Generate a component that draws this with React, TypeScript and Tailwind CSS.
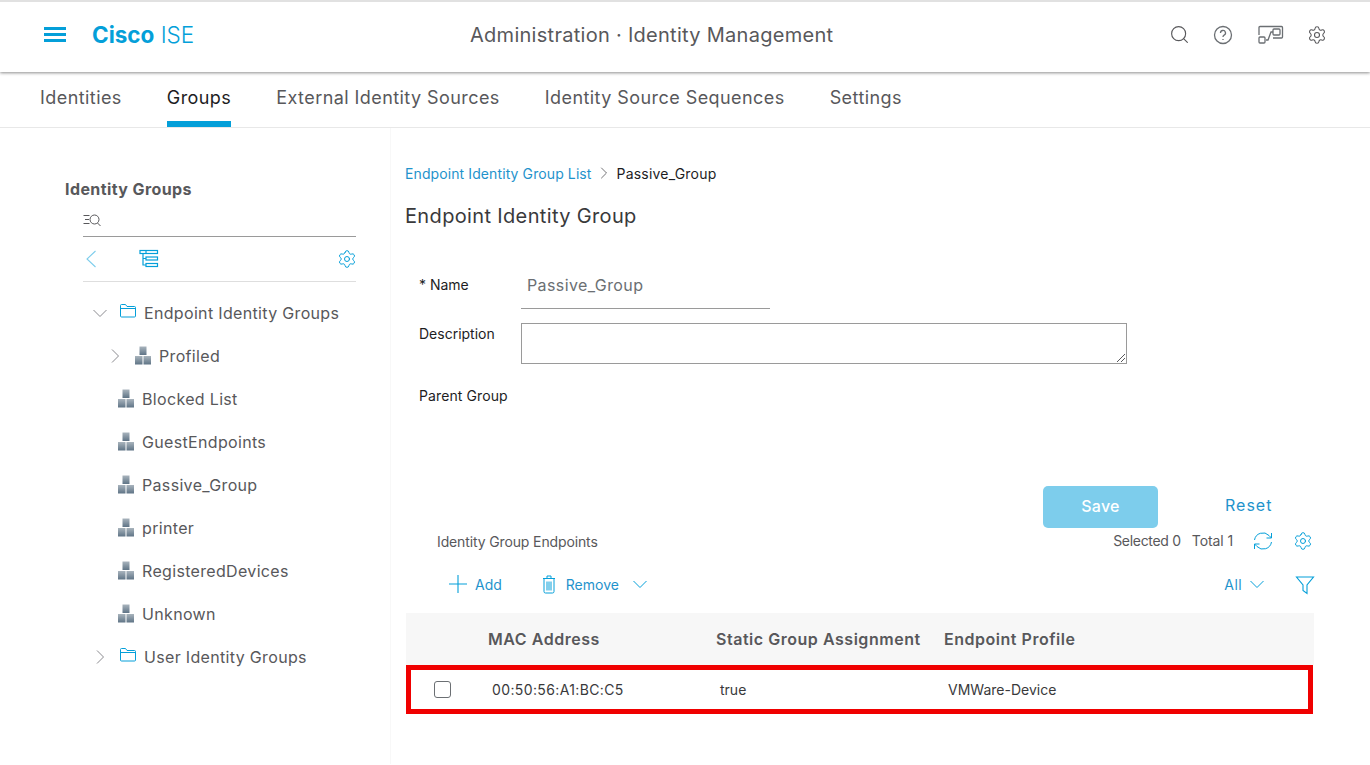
import { ChevronRight, Search, Settings } from 'lucide-react';

const tabs = ['Identities', 'Groups', 'External Identity Sources', 'Identity Source Sequences', 'Settings'];
const groups = ['Blocked List', 'GuestEndpoints', 'Passive_Group', 'printer', 'RegisteredDevices', 'Unknown'];

const Blocks = () => (
  <svg width="18" height="19" viewBox="0 0 18 19" className="shrink-0">
    <defs>
      <linearGradient id="blockFill" x1="0" y1="0" x2="0" y2="1">
        <stop offset="0" stopColor="#a9b4bd" />
        <stop offset="1" stopColor="#5f7486" />
      </linearGradient>
    </defs>
    <rect x="5.5" y="0.5" width="7" height="8.5" fill="url(#blockFill)" />
    <rect x="1" y="10" width="7.5" height="8.5" fill="url(#blockFill)" />
    <rect x="9.5" y="10" width="7.5" height="8.5" fill="url(#blockFill)" />
  </svg>
);

const TreeIcon = () => (
  <svg width="20" height="20" viewBox="0 0 20 20" fill="none" stroke="#049fd9" strokeWidth="1.2">
    <rect x="1" y="1.5" width="17.5" height="3" />
    <rect x="7" y="8" width="11.5" height="3" />
    <rect x="7" y="14.5" width="11.5" height="3" />
    <path d="M4 4.5v11.5h3M4 9.5h3M7 1.5v3" />
  </svg>
);

const FlowIcon = () => (
  <svg width="26" height="20" viewBox="0 0 26 20" fill="none" stroke="#6b6f73" strokeWidth="1.3">
    <path d="M1 10V2.5A1 1 0 0 1 2 1.5h21.5a1 1 0 0 1 1 1V12a1 1 0 0 1-1 1H15" />
    <rect x="1" y="12" width="6" height="6" rx="1" />
    <rect x="15" y="4" width="7" height="6" rx="1" />
    <path d="M8 15h2l3-8h2" />
  </svg>
);

const SearchList = () => (
  <svg width="20" height="14" viewBox="0 0 20 14" fill="none" stroke="#58585b" strokeWidth="1">
    <path d="M0.5 2.5h6M2 6.5h4M0.5 10.5h6" />
    <circle cx="11.5" cy="6.5" r="4.5" />
    <path d="M14.5 10l3 3" />
  </svg>
);

const Funnel = () => (
  <svg width="20" height="20" viewBox="0 0 20 20" fill="none" stroke="#049fd9" strokeWidth="1.1">
    <path d="M1.5 2h17l-6.5 8v8.5l-4-3V10z" />
  </svg>
);

const Caret = ({ color = '#049fd9', dir = 'down' }: { color?: string; dir?: 'down' | 'right' }) => (
  <svg width="14" height="14" viewBox="0 0 14 14" fill="none" stroke={color} strokeWidth="1" className="shrink-0">
    <path d={dir === 'down' ? 'M0.5 4l6.5 6.5L13.5 4' : 'M4 0.5l6.5 6.5L4 13.5'} />
  </svg>
);

const FolderIcon = () => (
  <svg width="16" height="14" viewBox="0 0 16 14" fill="none" stroke="#049fd9" strokeWidth="1" className="mb-[4px] shrink-0">
    <path d="M0.5 12V1.5a1 1 0 0 1 1-1h4l1.5 2h7.5a1 1 0 0 1 1 1V12a1 1 0 0 1-1 1h-13a1 1 0 0 1-1-1zM0.5 4.5h15" />
  </svg>
);

const TrashIcon = () => (
  <svg width="14" height="19" viewBox="0 0 14 19" fill="none" stroke="#049fd9" strokeWidth="1" className="shrink-0">
    <path d="M1 3.5h12M5 3.5V1h4v2.5M2 3.5v13a1.5 1.5 0 0 0 1.5 1.5h7a1.5 1.5 0 0 0 1.5-1.5v-13M5 6.5v9M7 6.5v9M9 6.5v9" />
  </svg>
);

const RefreshIcon = () => (
  <svg width="20" height="20" viewBox="0 0 20 20" fill="none" stroke="#049fd9" strokeWidth="1" className="shrink-0">
    <path d="M1.5 9A8.5 8.5 0 0 1 16 4.5l2.5 2.5M18.5 2v5h-5M18.5 11A8.5 8.5 0 0 1 4 15.5L1.5 13M1.5 18v-5h5" />
  </svg>
);

export default function App() {
  return (
    <div className="h-[765px] w-[1370px] overflow-hidden bg-white font-['Inter',sans-serif] text-[#39393b]">
      <header className="flex h-[72px] items-center border-t-2 border-[#e1e1e1] pb-[5px] pl-[44px] pr-[43px] shadow-[0_1px_3px_rgba(0,0,0,0.45)]">
        <div className="flex w-[22px] flex-col gap-[3px]">
          <span className="h-[3px] bg-[#049fd9]" />
          <span className="h-[3px] bg-[#049fd9]" />
          <span className="h-[3px] bg-[#049fd9]" />
        </div>
        <div className="ml-[26px] w-[378px] text-[22.5px] text-[#049fd9]">
          <span className="font-bold">Cisco</span> <span className="font-light">ISE</span>
        </div>
        <div className="text-[20px] tracking-[0.28px] text-[#58585b]">Administration · Identity Management</div>
        <div className="ml-auto flex items-center">
          <Search size={21} strokeWidth={1.3} className="text-[#58585b]" />
          <svg width="20" height="20" viewBox="0 0 20 20" fill="none" stroke="#6b6f73" strokeWidth="1.3" className="ml-[23px]">
            <circle cx="10" cy="10" r="8.5" />
            <path d="M7.5 8a2.5 2.5 0 1 1 3.6 2.2c-.8.4-1.1.9-1.1 1.8M10 14v1" />
          </svg>
          <div className="ml-[25px]"><FlowIcon /></div>
          <Settings size={20} strokeWidth={1.3} className="ml-[23px] text-[#58585b]" />
        </div>
      </header>

      <nav className="flex h-[56px] items-end gap-[45px] border-b border-[#e8e8e8] pl-[40px] text-[18px] tracking-[0.43px] text-[#58585b]">
        {tabs.map((tab) => (
          <div
            key={tab}
            className={`flex h-[54px] items-center border-b-[6px] ${tab === 'Groups' ? 'border-[#049fd9] text-[#1d1d1f]' : 'border-transparent'}`}
          >
            {tab}
          </div>
        ))}
      </nav>

      <div className="flex h-[636px]">
        <aside className="w-[391px] shrink-0 border-r border-[#f8f8f8] pl-[65px] pr-[34px] pt-[51px]">
          <h2 className="text-[16px] font-bold leading-[20px] tracking-[0.4px] text-[#58585b]">Identity Groups</h2>
          <div className="ml-[18px] mt-[11px] flex h-[27px] items-center border-b border-[#9a9a9a] pb-[7px]">
            <SearchList />
          </div>
          <div className="ml-[18px] flex h-[45px] items-center border-b border-[#dedede]">
            <svg width="12" height="18" viewBox="0 0 12 18" fill="none" stroke="#7dcdec" strokeWidth="1.1" className="ml-[2px]">
              <path d="M10.5 1L2 9l8.5 8" />
            </svg>
            <div className="ml-[42px]"><TreeIcon /></div>
            <Settings size={20} strokeWidth={1.2} className="-mr-[1px] ml-auto text-[#049fd9]" />
          </div>
          <ul className="mt-[9px] text-[16px] tracking-[0.33px] text-[#58585b]">
            <li className="flex h-[43px] items-center pl-[28px]">
              <Caret color="#8a8a8f" />
              <div className="ml-[13px]"><FolderIcon /></div>
              <span className="ml-[8px]">Endpoint Identity Groups</span>
            </li>
            <li className="flex h-[43px] items-center pl-[43px]">
              <Caret color="#8a8a8f" dir="right" />
              <div className="ml-[12px]"><Blocks /></div>
              <span className="ml-[7px]">Profiled</span>
            </li>
            {groups.map((group) => (
              <li key={group} className="flex h-[43px] items-center pl-[52px]">
                <Blocks />
                <span className="ml-[7px]">{group}</span>
              </li>
            ))}
            <li className="flex h-[43px] items-center pl-[28px]">
              <Caret color="#8a8a8f" dir="right" />
              <div className="ml-[13px]"><FolderIcon /></div>
              <span className="ml-[8px]">User Identity Groups</span>
            </li>
          </ul>
        </aside>

        <main className="flex-1 pl-[14px] pr-[56px] pt-[35px]">
          <div className="flex h-[20px] items-center text-[14px] tracking-[0.1px]">
            <span className="text-[#1f93cc]">Endpoint Identity Group List</span>
            <ChevronRight size={20} strokeWidth={1} className="mx-[2px] text-[#58585b]" />
            <span className="ml-[1px] tracking-[0.2px] text-[#1d1d1f]">Passive_Group</span>
          </div>
          <h1 className="mt-[20px] text-[20px] leading-[26px] tracking-[0.35px] text-[#39393b]">Endpoint Identity Group</h1>

          <div className="ml-[14px] mt-[34px]">
            <div className="flex h-[46px] items-start">
              <label className="w-[102px] pt-[12px] text-[14px] leading-[20px] text-[#1d1d1f]">* Name</label>
              <div className="h-[46px] w-[249px] border-b border-[#9a9a9a] pl-[6px] pt-[11px] text-[16px] leading-[22px] tracking-[0.4px] text-[#6b6f73]">Passive_Group</div>
            </div>
            <div className="mt-[14px] flex">
              <label className="w-[102px] text-[14px] leading-[22px] text-[#1d1d1f]">Description</label>
              <div className="relative h-[41px] w-[606px] border border-[#9a9a9a]">
                <svg width="10" height="10" viewBox="0 0 10 10" className="absolute bottom-0 right-0" stroke="#58585b" fill="none">
                  <path d="M1 9l8-8M5 9l4-4" />
                </svg>
              </div>
            </div>
            <div className="mt-[21px] text-[14px] leading-[22px] tracking-[0.1px] text-[#1d1d1f]">Parent Group</div>
          </div>

          <div className="mt-[79px] flex items-center pl-[638px]">
            <button className="h-[42px] w-[115px] rounded-[5px] bg-[#7dcdec] pb-[2px] text-[16px] font-medium tracking-[0.3px] text-white">Save</button>
            <span className="mb-[4px] ml-[67px] text-[16px] tracking-[1px] text-[#1f93cc]">Reset</span>
          </div>

          <div className="flex h-[25px] items-center pl-[32px] pr-[1px] text-[14px]">
            <span className="mt-[2px] tracking-[-0.13px] text-[#58585b]">Identity Group Endpoints</span>
            <span className="ml-auto tracking-[-0.3px] text-[#58585b]">Selected 0</span>
            <span className="ml-[11px] tracking-[-0.1px] text-[#58585b]">Total 1</span>
            <div className="ml-[20px]"><RefreshIcon /></div>
            <Settings size={20} strokeWidth={1.2} className="ml-[20px] text-[#049fd9]" />
          </div>

          <div className="flex h-[60px] items-center pl-[43px] pt-[2px] text-[14px] text-[#1f93cc]">
            <svg width="20" height="20" viewBox="0 0 20 20" fill="none" stroke="#049fd9" strokeWidth="1.1" className="shrink-0">
              <path d="M10 1v18M1 10h18" />
            </svg>
            <span className="ml-[7px]">Add</span>
            <div className="ml-[40px]"><TrashIcon /></div>
            <span className="ml-[10px]">Remove</span>
            <div className="ml-[14px]"><Caret /></div>
            <span className="ml-auto tracking-[0.4px]">All</span>
            <div className="ml-[8px]"><Caret /></div>
            <div className="-mr-[1px] ml-[31px] mt-[2px]"><Funnel /></div>
          </div>

          <div className="ml-[1px] w-[908px]">
            <div className="grid h-[52px] grid-cols-[82px_228px_228px_1fr] items-center bg-[#f7f7f7] text-[16px] font-semibold tracking-[0.53px] text-[#58585b]">
              <span />
              <span>MAC Address</span>
              <span>Static Group Assignment</span>
              <span>Endpoint Profile</span>
            </div>
            <div className="mr-[1px] grid h-[49px] grid-cols-[81px_228px_228px_1fr] items-center border-[5px] border-[#f00000] text-[14px] text-[#39393b]">
              <span className="pl-[23px]"><span className="block h-[17px] w-[17px] rounded-[3px] border border-[#6b6f73]" /></span>
              <span className="tracking-[0.37px]">00:50:56:A1:BC:C5</span>
              <span>true</span>
              <span>VMWare-Device</span>
            </div>
          </div>
        </main>
      </div>
    </div>
  );
}
